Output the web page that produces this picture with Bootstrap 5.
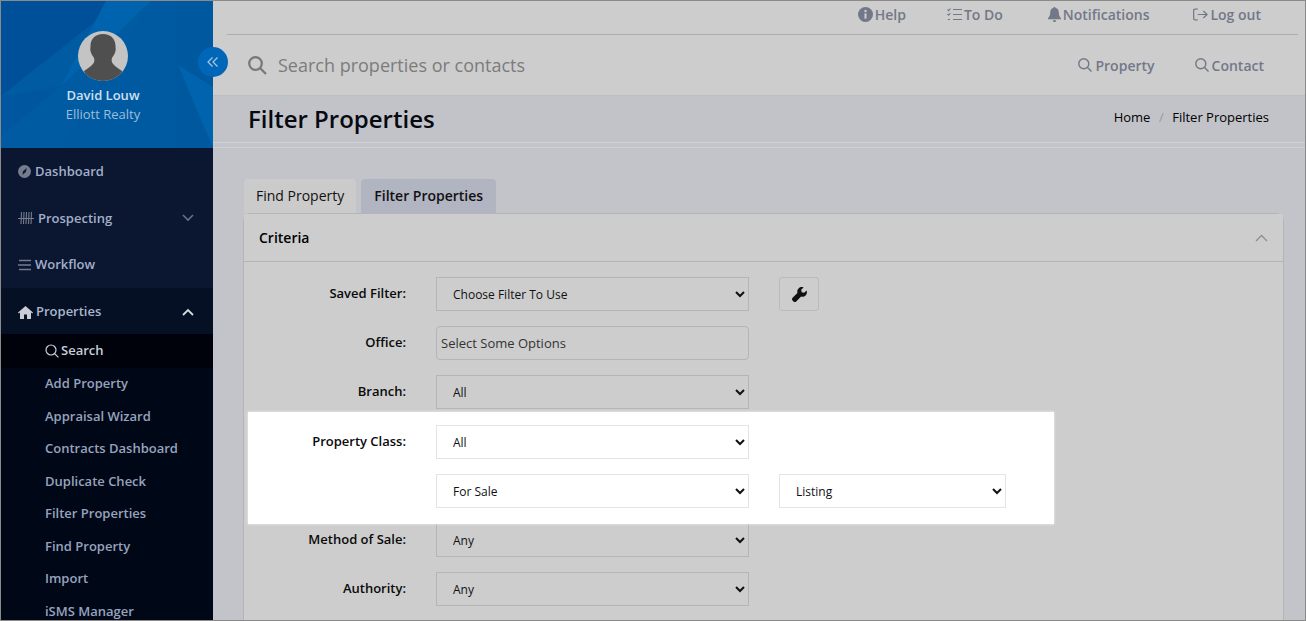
<!DOCTYPE html>
<html lang="en">
<head>
<meta charset="utf-8">
<title>Filter Properties</title>
<link href="https://cdn.jsdelivr.net/npm/bootstrap@5.3.0/dist/css/bootstrap.min.css" rel="stylesheet">
<style>
html,body{height:621px;overflow:hidden}
body{font-family:"Open Sans",sans-serif;font-size:13px;background:#c3c4c9;color:#000}
.app-frame{height:621px;border:1px solid #8a8a8a;overflow:hidden}
.side-col{width:212px;flex:none;background:#0b1630;overflow:hidden}
.side-head{height:147px;background:#005ba3;overflow:hidden;color:#d5e3ef}
.side-art{left:0;top:0}
.side-who{padding:30px 8px 0 0}
.avatar{width:50px;height:50px;border-radius:50%;background:#c4c4c4;overflow:hidden}
.who-name{font-weight:600;font-size:13px;margin-top:4px;line-height:20px;color:#cfe0ee}
.who-org{font-size:13px;line-height:18px;color:#9dbdd8}
.side-link{display:flex;align-items:center;gap:4px;padding:0 17px;height:46.6px;color:#a3afc9;font-weight:600;font-size:13px;text-decoration:none}
.side-link svg.ic{flex:none}
.side-link .chev{margin-left:auto;margin-right:2px}
.side-first{height:47px}
.side-open{background:#061024;color:#a9b5cd;height:46px;gap:3px;padding-top:2px}
.side-sub{background:#000818}
.sub-link{display:flex;align-items:center;gap:2px;height:32.5px;padding-left:44px;color:#97a3bc;font-weight:600;font-size:13px;text-decoration:none}
.sub-on{background:#00020b;color:#c9ced8;height:33.4px}
.toggle-btn{left:197px;top:46px;width:30px;height:30px;border-radius:50%;background:#0066b8;color:#a8c9e6;z-index:3}
.main-col{min-width:0;background:#c3c4c9}
.top-wrap{background:#cdcdcd;height:95px;border-bottom:1px solid #bdbdbd;padding-left:14px}
.top-util{height:34px;margin-right:7px;border-bottom:1px solid #adadad;justify-content:flex-end;padding:0 37px 6px 0}
.util-link{display:flex;align-items:center;gap:2px;color:#737888;font-weight:600;font-size:14px;text-decoration:none;line-height:28px}
.util-todo{margin-left:41px}
.util-bell{margin-left:45px}
.util-out{margin-left:44px}
.top-search{height:59px;padding:1px 41px 0 21px}
.search-hint{font-size:18px;color:#7c7c7c;margin-left:11px}
.find-link{display:flex;align-items:center;gap:3px;color:#737888;font-weight:600;font-size:14px;text-decoration:none;margin-left:40px}
.title-band{height:46px;padding:0 36px 0 35px;background:#c2c3c8}
.title-text{font-size:24px;font-weight:600;margin:0;line-height:46px;color:#06090f}
.crumbs{--bs-breadcrumb-margin-bottom:2px;--bs-breadcrumb-divider-color:#999;--bs-breadcrumb-item-padding-x:8.5px;font-size:13px}
.crumbs a,.crumbs .active{color:#000;text-decoration:none}
.rule-pair{height:6px;border-top:1px solid #d0d1d4;border-bottom:1px solid #d0d1d4}
.page-pad{padding:31px 21px 0 30px}
.tab-row{gap:5px;border:0;height:34px;margin-left:1px}
.tab-item{display:flex;align-items:center;height:34px;padding:0 12px 2px;font-size:14px;border-radius:4px 4px 0 0;color:#111;background:#cbcbcb;text-decoration:none}
.tab-on{background:#b1b4c1;font-weight:600;padding:0 13px 2px}
.crit-card{--bs-card-border-color:#b4b5b8;--bs-card-bg:#cdcdcd;--bs-card-border-radius:8px;--bs-card-inner-border-radius:7px;height:600px}
.crit-head{height:48px;padding:0 15px;background:#cdcdcd;border-bottom:1px solid #b4b5b8;font-weight:600;font-size:14px;line-height:46px}
.crit-body{padding:15px 0 0}
.f-row{display:flex;align-items:flex-start;height:34px;margin-bottom:15px}
.f-label{width:162px;text-align:right;font-weight:600;font-size:13px;line-height:32px;margin-right:30px;flex:none;color:#0a0a0a}
.f-select{appearance:auto;-webkit-appearance:auto;background-image:none;width:313px;height:34px;padding:0 4px 0 12px;font-size:12px;border-radius:0;border:1px solid #b4b5b8;background-color:#cdcdcd;color:#111;flex:none}
.f-second{width:227px;margin-left:30px}
.f-chosen{width:313px;height:34px;flex:none;border:1px solid #b4b5b8;border-radius:4px;padding:0 4px;line-height:32px;font-size:13px;color:#333;background:#cdcdcd}
.tool-btn{width:40px;height:34px;margin-left:30px;padding:0;border:1px solid #b9babd;border-radius:3px;background:#cdcdcd}
.spot{position:relative;z-index:2;width:806px;margin:-12px 0 -1px 4px;padding:13px 0 16px;background:#fff;box-shadow:0 0 3px rgba(255,255,255,.7)}
.spot .f-row:last-child{margin-bottom:0}
.spot .f-label{width:158px}
.spot .f-select{background-color:#fff;border-color:#e4e4e4}
</style>
</head>
<body>
<div class="app-frame d-flex position-relative">
  <aside class="side-col">
    <div class="side-head position-relative text-center">
      <svg class="side-art position-absolute" width="212" height="147" viewBox="0 0 212 147">
        <polygon points="0,0 120,0 0,95" fill="#005099"/>
        <polygon points="105,0 150,0 60,85" fill="#0063ad"/>
        <polygon points="150,0 175,0 175,60 175,147 60,147" fill="#005aa2"/>
        <polygon points="175,0 212,0 212,147 175,147" fill="#00589f"/>
        <polygon points="177,64 212,86 212,147" fill="#0063ad"/>
        <polygon points="0,95 60,85 0,135" fill="#00579f"/>
      </svg>
      <div class="side-who position-relative">
        <div class="avatar mx-auto">
          <svg width="50" height="50" viewBox="0 0 50 50"><path fill="#4f4f4f" d="M25 3c8 0 12.500 5 12.500 12 0 2 .5 3.500 0 5-.5 3-2.500 5-3.500 7-1 3 0 5 2 7 2 2 5 4 8 6l-1 4-5 6H13l-6-7-1-3c3-2 6-4 8-6 2-2 3-4 2-7-1-2-3-4-3.500-7-.5-1.500 0-3 0-5C12.500 8 17 3 25 3z"/></svg>
        </div>
        <div class="who-name">David Louw</div>
        <div class="who-org">Elliott Realty</div>
      </div>
    </div>
    <nav>
      <a class="side-link side-first" href="#"><svg class="ic" width="13" height="13" viewBox="0 0 13 13"><circle cx="6.500" cy="6.500" r="6.500" fill="#747c8e"/><path d="M8.800 3 5.200 6.200 4.400 10 7.800 6.900z" fill="#0b1630"/></svg>Dashboard</a>
      <a class="side-link" href="#"><svg class="ic" width="16" height="12" viewBox="0 0 16 12" stroke="#747c8e" stroke-width="1.100"><path d="M3.500 0 3 12M6 0 5.500 12M8.500 0 8 12M11 0 10.500 12M13.500 0 13 12M0 6.500h16"/></svg>Prospecting<svg class="chev" width="12" height="8" viewBox="0 0 12 8" fill="none" stroke="#667086" stroke-width="1.600"><path d="M1 1l5 5 5-5"/></svg></a>
      <a class="side-link" href="#"><svg class="ic" width="13" height="12" viewBox="0 0 13 12" stroke="#747c8e" stroke-width="1.300"><path d="M1 1.500h12M0 6h13M1 10.500h12"/></svg>Workflow</a>
      <a class="side-link side-open" href="#"><svg class="ic" width="15" height="13" viewBox="0 0 15 13"><path fill="#c8ccd5" d="M7.500 0 15 6.500l-.8.9L13 6.400V13H9V8.500H6V13H2V6.400L.8 7.400 0 6.500z"/></svg>Properties<svg class="chev" width="12" height="8" viewBox="0 0 12 8" fill="none" stroke="#d5d9e0" stroke-width="1.800"><path d="M1 7l5-5 5 5"/></svg></a>
      <div class="side-sub">
        <a class="sub-link sub-on" href="#"><svg width="14" height="14" viewBox="0 0 14 14" fill="none" stroke="#c9ced8" stroke-width="1.200"><circle cx="6" cy="6" r="5"/><path d="M9.600 9.600 13.400 13.400"/></svg>Search</a>
        <a class="sub-link" href="#">Add Property</a>
        <a class="sub-link" href="#">Appraisal Wizard</a>
        <a class="sub-link" href="#">Contracts Dashboard</a>
        <a class="sub-link" href="#">Duplicate Check</a>
        <a class="sub-link" href="#">Filter Properties</a>
        <a class="sub-link" href="#">Find Property</a>
        <a class="sub-link" href="#">Import</a>
        <a class="sub-link" href="#">iSMS Manager</a>
      </div>
    </nav>
  </aside>
  <button class="toggle-btn position-absolute border-0 p-0 d-flex align-items-center justify-content-center" type="button" aria-label="Collapse">
    <svg width="12" height="10" viewBox="0 0 12 10" fill="none" stroke="currentColor" stroke-width="1.200"><path d="M5.500 .5 1 5l4.500 4.500M10.500 .5 6 5l4.500 4.500"/></svg>
  </button>
  <main class="main-col flex-grow-1">
    <header class="top-wrap">
      <div class="top-util d-flex align-items-center">
        <a class="util-link" href="#"><svg width="15" height="15" viewBox="0 0 16 16"><circle cx="8" cy="8" r="8" fill="#737888"/><rect x="6.900" y="6.800" width="2.200" height="5.600" fill="#cdcdcd"/><circle cx="8" cy="4.300" r="1.300" fill="#cdcdcd"/></svg>Help</a>
        <a class="util-link util-todo" href="#"><svg width="15" height="13" viewBox="0 0 15 13" fill="none" stroke="#737888" stroke-width="1.100"><path d="M0.500 1.500 1.600 2.600 3.500 .5M0.500 6 1.600 7.100 3.500 5M0.800 11.500h2.200M6 1.500h9M6 6.500h9M6 11.500h9"/></svg>To Do</a>
        <a class="util-link util-bell" href="#"><svg width="13" height="15" viewBox="0 0 13 15"><path fill="#737888" d="M6.500 0c.7 0 1.100.5 1.100 1.100 2.200.5 3.200 2.300 3.200 4.400 0 3 1 4.400 2.200 5.700v1H0v-1c1.200-1.300 2.200-2.700 2.200-5.700 0-2.100 1-3.900 3.200-4.400C5.400.5 5.800 0 6.500 0zM4.800 13.200h3.400C8.200 14.200 7.400 15 6.500 15s-1.700-.8-1.700-1.800z"/></svg>Notifications</a>
        <a class="util-link util-out" href="#"><svg width="15" height="13" viewBox="0 0 16 13" fill="none" stroke="#737888" stroke-width="1.300"><path d="M5 .7H2A1.300 1.300 0 0 0 .7 2v9A1.300 1.300 0 0 0 2 12.300h3M5 6.500h10M11 2.700l4 3.800-4 3.800"/></svg>Log out</a>
      </div>
      <div class="top-search d-flex align-items-center">
        <svg width="19" height="19" viewBox="0 0 19 19" fill="none" stroke="#777" stroke-width="2.200"><circle cx="7.500" cy="7.500" r="6.300"/><path d="M12 12l6 6"/></svg>
        <span class="search-hint">Search properties or contacts</span>
        <a class="find-link ms-auto" href="#"><svg width="14" height="14" viewBox="0 0 14 14" fill="none" stroke="#737888" stroke-width="1.400"><circle cx="5.800" cy="5.800" r="5"/><path d="M9.300 9.300l4.200 4.200"/></svg>Property</a>
        <a class="find-link" href="#"><svg width="14" height="14" viewBox="0 0 14 14" fill="none" stroke="#737888" stroke-width="1.400"><circle cx="5.800" cy="5.800" r="5"/><path d="M9.300 9.300l4.200 4.200"/></svg>Contact</a>
      </div>
    </header>
    <div class="title-band d-flex align-items-center justify-content-between">
      <h1 class="title-text">Filter Properties</h1>
      <ol class="breadcrumb crumbs">
        <li class="breadcrumb-item"><a href="#">Home</a></li>
        <li class="breadcrumb-item active">Filter Properties</li>
      </ol>
    </div>
    <div class="rule-pair"></div>
    <div class="page-pad">
      <div class="d-flex tab-row">
        <a class="tab-item" href="#">Find Property</a>
        <a class="tab-item tab-on" href="#">Filter Properties</a>
      </div>
      <div class="card crit-card">
        <div class="crit-head d-flex justify-content-between align-items-center">
          <span>Criteria</span>
          <svg width="13" height="8" viewBox="0 0 13 8" fill="none" stroke="#8f8f8f" stroke-width="1.300"><path d="M1 7l5.500-5.500L12 7"/></svg>
        </div>
        <div class="crit-body">
          <div class="f-row">
            <label class="f-label">Saved Filter:</label>
            <select class="form-select f-select"><option>Choose Filter To Use</option></select>
            <button class="btn tool-btn d-flex align-items-center justify-content-center" type="button" aria-label="Settings"><svg width="15" height="15" viewBox="0 0 16 16"><path fill="#111" d="M15.500 3.600 13 6.100l-2.700-.5-.5-2.700L12.300.4C10.500-.3 8.400.1 7 1.500 5.700 2.800 5.300 4.700 5.800 6.300L.6 11.500c-.8.800-.8 2.100 0 2.900l1 1c.8.800 2.100.8 2.900 0l5.200-5.200c1.600.5 3.500.1 4.800-1.200 1.400-1.400 1.800-3.500 1-5.400z"/></svg></button>
          </div>
          <div class="f-row">
            <label class="f-label">Office:</label>
            <div class="f-chosen">Select Some Options</div>
          </div>
          <div class="f-row">
            <label class="f-label">Branch:</label>
            <select class="form-select f-select"><option>All</option></select>
          </div>
          <div class="spot">
            <div class="f-row">
              <label class="f-label">Property Class:</label>
              <select class="form-select f-select"><option>All</option></select>
            </div>
            <div class="f-row">
              <span class="f-label"></span>
              <select class="form-select f-select"><option>For Sale</option></select>
              <select class="form-select f-select f-second"><option>Listing</option></select>
            </div>
          </div>
          <div class="f-row">
            <label class="f-label">Method of Sale:</label>
            <select class="form-select f-select"><option>Any</option></select>
          </div>
          <div class="f-row">
            <label class="f-label">Authority:</label>
            <select class="form-select f-select"><option>Any</option></select>
          </div>
        </div>
      </div>
    </div>
  </main>
</div>
<script src="https://cdn.jsdelivr.net/npm/bootstrap@5.3.0/dist/js/bootstrap.bundle.min.js"></script>
</body>
</html>
